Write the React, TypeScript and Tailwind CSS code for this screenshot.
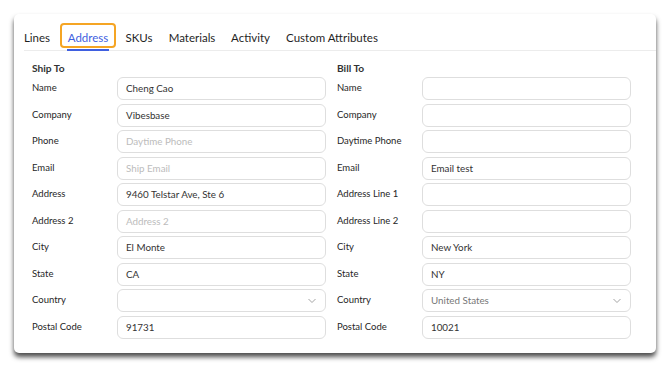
import React from 'react';

type Field = { label: string; value?: string; placeholder?: string; select?: boolean };

const shipTo: Field[] = [
  { label: 'Name', value: 'Cheng Cao' },
  { label: 'Company', value: 'Vibesbase' },
  { label: 'Phone', placeholder: 'Daytime Phone' },
  { label: 'Email', placeholder: 'Ship Email' },
  { label: 'Address', value: '9460 Telstar Ave, Ste 6' },
  { label: 'Address 2', placeholder: 'Address 2' },
  { label: 'City', value: 'El Monte' },
  { label: 'State', value: 'CA' },
  { label: 'Country', select: true },
  { label: 'Postal Code', value: '91731' },
];

const billTo: Field[] = [
  { label: 'Name' },
  { label: 'Company' },
  { label: 'Daytime Phone' },
  { label: 'Email', value: 'Email test' },
  { label: 'Address Line 1' },
  { label: 'Address Line 2' },
  { label: 'City', value: 'New York' },
  { label: 'State', value: 'NY' },
  { label: 'Country', value: 'United States', select: true },
  { label: 'Postal Code', value: '10021' },
];

const tabs = [
  { name: 'Lines', w: 'w-[26px]' },
  { name: 'Address', w: 'w-[42px]' },
  { name: 'SKUs', w: 'w-[26px]' },
  { name: 'Materials', w: 'w-[46px]' },
  { name: 'Activity', w: 'w-[37px]' },
  { name: 'Custom Attributes', w: 'w-[92px]' },
];

function Chevron() {
  return (
    <svg width="8" height="5" viewBox="0 0 8 5" className="absolute right-[9px] top-1/2 -translate-y-1/2">
      <path d="M0.5 0.5 L4 4 L7.5 0.5" fill="none" stroke="#a3a3a3" strokeWidth="1" />
    </svg>
  );
}

function Column({ title, fields }: { title: string; fields: Field[] }) {
  return (
    <div className="w-[294px]">
      <div className="text-[10.2px] leading-[14px] font-bold text-[#333] mb-[2px]">{title}</div>
      <div className="flex flex-col gap-[3.5px]">
        {fields.map((f) => (
          <div key={f.label} className="flex items-center h-[23px]">
            <div className="w-[85px] shrink-0 text-[9.5px] text-[#262626]">{f.label}</div>
            <div className="relative flex-1 h-[23px] rounded-[6px] border border-[#dedede] bg-white flex items-center pl-[8px]">
              {f.value ? (
                <span className={f.select ? 'text-[9.8px] text-[#777]' : 'text-[9.8px] text-[#333]'}>{f.value}</span>
              ) : f.placeholder ? (
                <span className="text-[9.8px] text-[#bcbcbc]">{f.placeholder}</span>
              ) : null}
              {f.select && <Chevron />}
            </div>
          </div>
        ))}
      </div>
    </div>
  );
}

export default function App() {
  return (
    <div className="w-[670px] h-[368px] bg-white pt-[14px] pl-[14px]" style={{ fontFamily: 'Lato, "Noto Sans", sans-serif' }}>
      <div className="w-[642px] h-[339px] bg-white rounded-[5px] shadow-[0_4px_5px_rgba(0,0,0,0.7)]">
        <div className="ml-[10px] h-[37px] border-b border-[#ececec] flex gap-[17px]">
          {tabs.map((t) => (
            <div key={t.name} className={`relative mt-[9px] h-[27px] flex items-center justify-center pt-[2px] ${t.w}`}>
              <span className={t.name === 'Address' ? 'whitespace-nowrap text-[11.5px] text-[#3f5fe0]' : 'whitespace-nowrap text-[11.5px] text-[#1f1f1f]'}>{t.name}</span>
              {t.name === 'Address' && (
                <>
                  <div className="absolute -left-[7px] -right-[7px] top-0 h-[25px] rounded-[4px] border-2 border-[#f5a524]" />
                  <div className="absolute left-0 right-0 -bottom-px h-[2px] bg-[#3f5fe0]" />
                </>
              )}
            </div>
          ))}
        </div>
        <div className="flex gap-[11px] pl-[18px] pt-[10px]">
          <Column title="Ship To" fields={shipTo} />
          <Column title="Bill To" fields={billTo} />
        </div>
      </div>
    </div>
  );
}
